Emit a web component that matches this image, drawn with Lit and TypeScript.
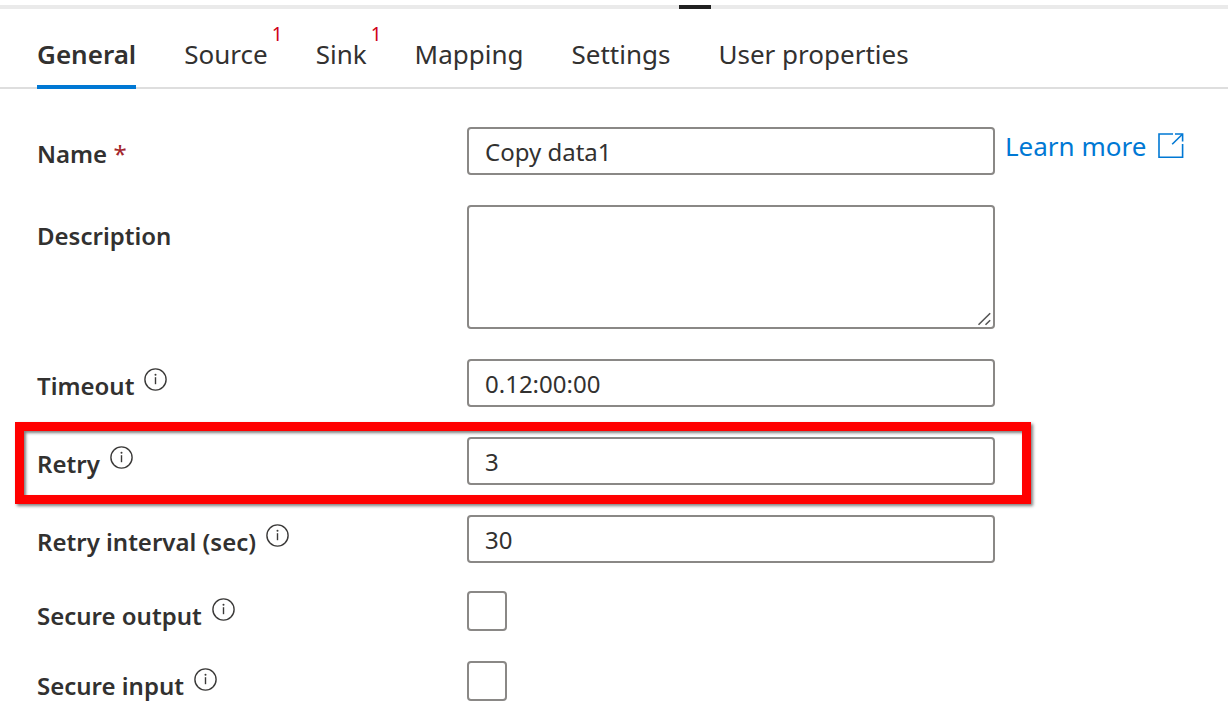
import { LitElement, html, css, svg, nothing } from "lit";
import { customElement, state } from "lit/decorators.js";

@customElement("info-icon")
export class InfoIcon extends LitElement {
  static styles = css`
    :host { display: block; width: 24px; height: 24px; flex: none; }
    svg { display: block; }
  `;
  render() {
    return html`<svg width="24" height="24" viewBox="0 0 24 24" fill="none" aria-hidden="true">
      <circle cx="11.5" cy="11.5" r="10.6" stroke="#3b3a39" stroke-width="1.4" />
      <path d="M11.5 9.2V16.2" stroke="#3b3a39" stroke-width="1.4" />
      <circle cx="11.5" cy="6.8" r="1" fill="#3b3a39" />
    </svg>`;
  }
}

interface Tab { label: string; errors?: number; }

const TABS: Tab[] = [
  { label: "General" },
  { label: "Source", errors: 1 },
  { label: "Sink", errors: 1 },
  { label: "Mapping" },
  { label: "Settings" },
  { label: "User properties" },
];

@customElement("app-root")
export class AppRoot extends LitElement {
  static styles = css`
    :host {
      display: block;
      min-height: 100vh;
      box-sizing: border-box;
      background: #fff;
      color: #323130;
      font-family: "Noto Sans", "Open Sans", sans-serif;
      font-size: 24px;
      line-height: 30px;
      overflow-x: hidden;
    }
    *, *::before, *::after { box-sizing: border-box; }

    .splitter {
      display: grid;
      grid-template-columns: 679fr 32px 517fr;
      height: 4px;
      margin-top: 5px;
      background: #eaeaea;
    }
    .grip { grid-column: 2; background: #212121; }

    .tabs {
      display: flex;
      gap: 48px;
      height: 80px;
      padding: 0 37px;
      border-bottom: 2px solid #dedede;
    }
    .tab {
      position: relative;
      height: 80px;
      padding: 14px 0 0;
      border: 0;
      border-bottom: 4px solid transparent;
      background: none;
      color: inherit;
      font: inherit;
      font-size: 26px;
      white-space: nowrap;
      cursor: pointer;
    }
    .tab.active { border-color: #0078d4; font-weight: 600; }
    .count {
      position: absolute;
      top: 13px;
      right: -15px;
      color: #d00017;
      font-size: 19px;
      line-height: 24px;
    }

    .form {
      display: flex;
      flex-direction: column;
      gap: 30px;
      padding: 38px 24px 11px 37px;
    }
    .row {
      position: relative;
      display: grid;
      grid-template-columns: 430px minmax(0, 528px) auto;
      justify-content: start;
      align-items: start;
    }
    .checks { display: flex; flex-direction: column; gap: 30px; margin-top: -2px; }
    .caption { display: flex; gap: 10px; }
    .caption label { padding-top: 12px; font-weight: 600; white-space: nowrap; }
    .caption info-icon { margin-top: 9px; }
    .tall label { padding-top: 16px; }
    .checks label { padding-top: 10px; }
    .checks info-icon { margin-top: 7px; }
    .required { color: #a4262c; font-weight: 400; }

    .field {
      display: block;
      width: 100%;
      height: 48px;
      margin: 0;
      padding: 0 16px;
      border: 2px solid #8a8886;
      border-radius: 4px;
      background: #fff;
      color: inherit;
      font: inherit;
      outline: none;
    }
    .field:focus { border-color: #0078d4; }
    .area { position: relative; }
    textarea.field { height: 124px; padding: 8px 16px; resize: vertical; }
    textarea.field::-webkit-resizer { display: none; }
    .resizer {
      position: absolute;
      right: 2px;
      bottom: 2px;
      pointer-events: none;
    }
    .box {
      appearance: none;
      display: block;
      width: 40px;
      height: 40px;
      margin: 0;
      border: 2px solid #8a8886;
      border-radius: 4px;
      background: #fff;
    }
    .box:checked { background: #0078d4; border-color: #0078d4; }

    .learn {
      display: flex;
      gap: 12px;
      margin-left: 10px;
      padding-top: 4px;
      color: #0078d4;
      font-size: 26px;
      text-decoration: none;
      white-space: nowrap;
    }
    .learn svg { margin-top: 2px; }

    .highlight {
      position: absolute;
      grid-column: 1 / 3;
      inset: -15px -36px -19px -22px;
      border: 9px solid #f00;
      box-shadow: 2px 2px 3px rgba(0, 0, 0, 0.5), inset 2px 2px 3px rgba(0, 0, 0, 0.5);
      pointer-events: none;
    }
  `;

  @state() private active = "General";

  private textRow(id: string, label: string, value: string, highlighted = false) {
    return html`<div class="row">
      <div class="caption"><label for=${id}>${label}</label><info-icon></info-icon></div>
      <input class="field" id=${id} type="text" .value=${value} />
      ${highlighted ? html`<div class="highlight"></div>` : nothing}
    </div>`;
  }

  private checkRow(id: string, label: string) {
    return html`<div class="row">
      <div class="caption"><label for=${id}>${label}</label><info-icon></info-icon></div>
      <input class="box" id=${id} type="checkbox" />
    </div>`;
  }

  render() {
    return html`
      <div class="splitter"><div class="grip"></div></div>
      <div class="tabs" role="tablist">
        ${TABS.map((t) => html`<button
          class="tab ${t.label === this.active ? "active" : ""}"
          role="tab"
          aria-selected=${t.label === this.active}
          @click=${() => (this.active = t.label)}
        >${t.label}${t.errors ? html`<span class="count">${t.errors}</span>` : nothing}</button>`)}
      </div>
      <form class="form" @submit=${(e: Event) => e.preventDefault()}>
        <div class="row">
          <div class="caption"><label for="name">Name <span class="required">*</span></label></div>
          <input class="field" id="name" type="text" required .value=${"Copy data1"} />
          <a class="learn" href="#learn-more">Learn more
            <svg width="26" height="26" viewBox="0 0 26 26" fill="none" stroke="#0078d4" stroke-width="1.6" aria-hidden="true">
              ${svg`<path d="M15 1H1V24.2H24.6V11" /><path d="M17 1H24.6V8.6" /><path d="M24.4 1.2L14.2 11.2" />`}
            </svg>
          </a>
        </div>
        <div class="row tall">
          <div class="caption"><label for="description">Description</label></div>
          <div class="area">
            <textarea class="field" id="description"></textarea>
            <svg class="resizer" width="16" height="16" viewBox="0 0 16 16" stroke="#555" stroke-width="1.6" aria-hidden="true">
              <path d="M1.5 13.8L13.2 2.2M8.5 13.8L13.2 9.2" />
            </svg>
          </div>
        </div>
        ${this.textRow("timeout", "Timeout", "0.12:00:00")}
        ${this.textRow("retry", "Retry", "3", true)}
        ${this.textRow("interval", "Retry interval (sec)", "30")}
        <div class="checks">
          ${this.checkRow("secure-output", "Secure output")}
          ${this.checkRow("secure-input", "Secure input")}
        </div>
      </form>
    `;
  }
}
